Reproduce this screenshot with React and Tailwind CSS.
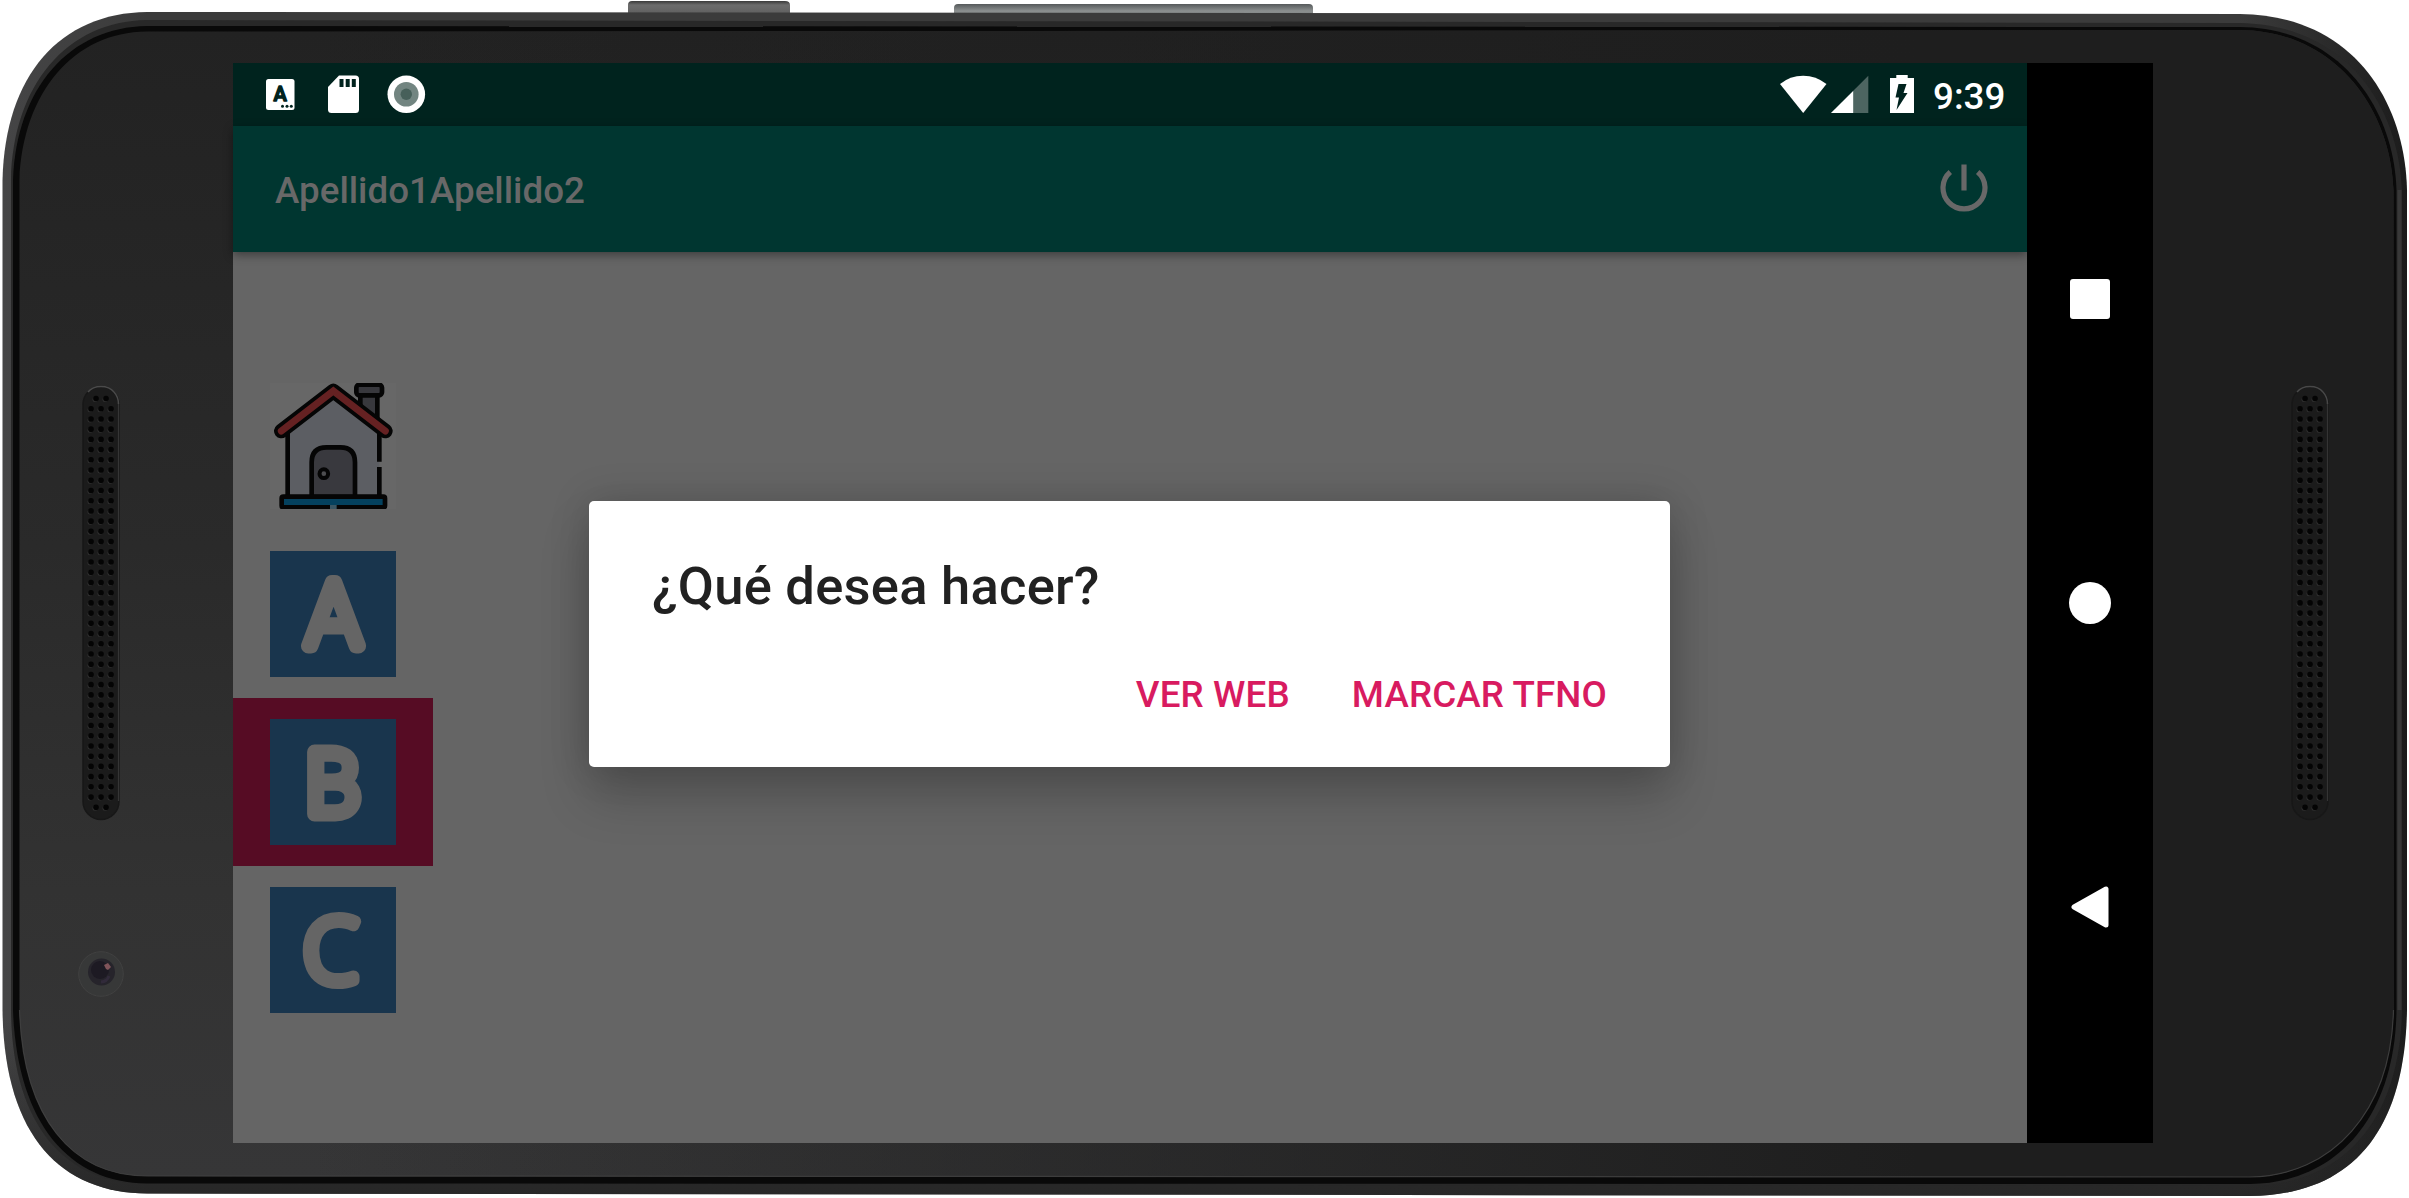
import React from "react";

const SPEAKER_ROWS = Array.from({ length: 41 }, (_, i) => i);

function DeviceBody() {
  return (
    <svg className="absolute inset-0" width="2409" height="1198" viewBox="0 0 2409 1198" aria-hidden="true">
      <defs>
        <linearGradient id="face" x1="0" y1="0" x2="0" y2="1">
          <stop offset="0" stopColor="#222222" />
          <stop offset="0.45" stopColor="#2a2a2a" />
          <stop offset="0.75" stopColor="#323232" />
          <stop offset="1" stopColor="#363637" />
        </linearGradient>
        <linearGradient id="faceRight" x1="0" y1="0" x2="1" y2="0">
          <stop offset="0" stopColor="#1e1e1e" stopOpacity="0" />
          <stop offset="0.12" stopColor="#1e1e1e" stopOpacity="0" />
          <stop offset="0.8" stopColor="#1e1e1e" stopOpacity="1" />
        </linearGradient>
        <linearGradient id="rim" x1="0" y1="0" x2="1" y2="0">
          <stop offset="0" stopColor="#454546" />
          <stop offset="0.06" stopColor="#3b3b3b" />
          <stop offset="0.93" stopColor="#3b3b3b" />
          <stop offset="1" stopColor="#1c1c1c" />
        </linearGradient>
        <linearGradient id="rimShade" x1="0" y1="0" x2="0" y2="1">
          <stop offset="0" stopColor="#222" stopOpacity="0" />
          <stop offset="0.85" stopColor="#222" stopOpacity="0" />
          <stop offset="1" stopColor="#222" stopOpacity="0.8" />
        </linearGradient>
        <linearGradient id="key" x1="0" y1="0" x2="0" y2="1">
          <stop offset="0" stopColor="#3a3a3a" />
          <stop offset="0.25" stopColor="#6c6c6c" />
          <stop offset="1" stopColor="#5c5c5c" />
        </linearGradient>
        <linearGradient id="keyLight" x1="0" y1="0" x2="0" y2="1">
          <stop offset="0" stopColor="#55595a" />
          <stop offset="0.5" stopColor="#8c9090" />
          <stop offset="1" stopColor="#777a7a" />
        </linearGradient>
      </defs>
      <path d="M628 16V5q0-4 4-4h153q5 0 5 4v12z" fill="url(#key)" />
      <path d="M954 16V8q0-4 4-4h351q4 0 4 4v10z" fill="url(#keyLight)" />
      <path
        d="M147 12L2240 14C2352 15 2405 100 2407 190V1010C2405 1134 2350 1195 2250 1196L147 1193.500C60 1193 4 1135 2.500 1010V180C5 75 60 13 147 12Z"
        fill="url(#rim)"
      />
      <path
        d="M147 12L2240 14C2352 15 2405 100 2407 190V1010C2405 1134 2350 1195 2250 1196L147 1193.500C60 1193 4 1135 2.500 1010V180C5 75 60 13 147 12Z"
        fill="url(#rimShade)"
      />
      <path
        d="M147 20L2240 23C2345 25 2399 105 2402 190V1010C2400 1122 2342 1185 2250 1186L147 1184C65 1184 12 1125 11 1010V180C13 85 67 21 147 20Z"
        fill="#282828"
      />
      <path
        d="M147 26L2240 27C2340 28 2394 108 2396.500 190V1010C2395 1118 2336 1183 2250 1184L147 1183.500C68 1183 17 1122 13 1010V180C16 88 70 27 147 26Z"
        fill="#090909"
      />
      <path
        d="M147 31.500L2240 30C2336 31 2391 110 2393.500 190V1010C2391 1112 2332 1176 2250 1177L147 1176C72 1176 23 1118 19.500 1010V180C23 92 74 32 147 31.500Z"
        fill="url(#face)"
      />
      <path
        d="M147 31.500L2240 30C2336 31 2391 110 2393.500 190V1010C2391 1112 2332 1176 2250 1177L147 1176C72 1176 23 1118 19.500 1010V180C23 92 74 32 147 31.500Z"
        fill="url(#faceRight)"
      />
      <path d="M2393.500 1010C2391 1112 2332 1176 2250 1177L147 1176C72 1176 23 1118 19.500 1010" fill="none" stroke="#454545" strokeOpacity="0.8" strokeWidth="1.200" />
      <path d="M2399.500 190V1010" stroke="#383838" strokeWidth="4" />
    </svg>
  );
}

function Speaker({ edge }) {
  return (
    <svg width="38" height="436" viewBox="0 0 38 436" aria-hidden="true">
      <rect x="1" y="1.500" width="36" height="433" rx="18" fill="#1b1b1b" stroke="#171717" strokeWidth="1.500" />
      <path d="M6 7C12 -0.500 26 -0.500 32 7Q36.500 12 36.500 19" fill="none" stroke={edge} strokeWidth="1.500" />
      <path d="M36.500 18V416" stroke={edge} strokeOpacity="0.600" strokeWidth="1.200" />
      {SPEAKER_ROWS.map((row) => {
        const columns = row === 0 || row === 40 ? [14, 24] : [9, 19, 29];
        return columns.map((x) => (
          <g key={`${row}-${x}`}>
            <circle cx={x - 1} cy={14.500 + row * 10.220} r="2.500" fill="#303030" />
            <circle cx={x} cy={13.500 + row * 10.220} r="2.800" fill="#040404" />
          </g>
        ));
      })}
    </svg>
  );
}

function Camera() {
  return (
    <svg width="46" height="46" viewBox="0 0 46 46" aria-hidden="true">
      <circle cx="23" cy="23" r="22.300" fill="#373838" stroke="#414141" />
      <circle cx="23.500" cy="21" r="13.500" fill="#26242b" />
      <circle cx="22" cy="19" r="9" fill="#1d1a23" />
      <path d="M26 14l4-2 3 4-3 3-2-1z" fill="#80545a" />
      <path d="M31 25a9 9 0 0 1-8 6" stroke="#312a3a" strokeWidth="3" fill="none" />
    </svg>
  );
}

function HouseTile() {
  return (
    <svg width="126" height="126" viewBox="0 0 378 378" aria-label="Inicio">
      <rect width="378" height="378" fill="#676767" />
      <g stroke="#050505" strokeWidth="14">
        <path d="M271 30H322V120L271 82Z" fill="#38383d" />
        <rect x="259" y="5" width="77" height="32" rx="9" fill="#38383d" />
        <path d="M53 140L190 30L328 140V342H53Z" fill="#5c5e63" stroke="none" />
        <path d="M53 140V342M328 140V236M328 252V342" fill="none" />
        <path d="M125 342V238Q125 193 170 193H211Q255 193 255 238V342Z" fill="#39393e" />
        <circle cx="161.500" cy="272" r="13" fill="#4d4d50" strokeWidth="12" />
        <rect x="35" y="341" width="310" height="32" rx="5" fill="#04415e" />
      </g>
      <rect x="180" y="366" width="20" height="12" fill="#3a5663" />
      <path d="M34 144L190 24L346 144" fill="none" stroke="#050505" strokeWidth="44" strokeLinecap="round" strokeLinejoin="round" />
      <path d="M34 144L190 24L346 144" fill="none" stroke="#652122" strokeWidth="21" strokeLinecap="round" />
    </svg>
  );
}

function LetterTile({ children }) {
  return (
    <svg
      className="bg-[#19354d] fill-[#656565] stroke-[#656565]"
      width="126"
      height="126"
      viewBox="0 0 126 126"
      textAnchor="middle"
      strokeLinejoin="round"
      strokeLinecap="round"
    >
      {children}
    </svg>
  );
}

function StatusBar() {
  return (
    <div className="flex h-[63px] shrink-0 items-center bg-[#00231e] text-white">
      <svg width="200" height="63" viewBox="0 0 200 63" aria-hidden="true">
        <rect x="33" y="16" width="28.500" height="31" rx="2.500" fill="#fff" />
        <text x="47.200" y="37.800" textAnchor="middle" fontSize="20" stroke="#00231e" strokeWidth="1.500" strokeLinejoin="round" className="fill-[#00231e] font-['Roboto',sans-serif] font-medium">
          A
        </text>
        <g fill="#00231e">
          <circle cx="49.500" cy="43.300" r="1.500" />
          <circle cx="54" cy="43.300" r="1.500" />
          <circle cx="58.300" cy="43.300" r="1.500" />
        </g>
        <path d="M106 12.500H122.500Q126 12.500 126 16V46.500Q126 50 122.500 50H98.500Q95 50 95 46.500V24Z" fill="#fff" />
        <path d="M106.500 16h4v8h-4zM112.700 16h4v8h-4zM118.800 16h4v8h-4z" fill="#00231e" />
        <circle cx="173.300" cy="31.300" r="18.800" fill="#fff" />
        <circle cx="173.300" cy="31.300" r="12.300" fill="#728581" />
        <circle cx="173.300" cy="31.300" r="5.700" fill="#47605a" />
      </svg>
      <div className="ml-auto flex items-center pr-[19px]">
        <svg width="153" height="63" viewBox="0 0 153 63" className="mr-px" aria-hidden="true">
          <path d="M0 21Q10 12.700 23.200 12.700Q36 12.700 46.500 21L23.200 50Z" fill="#fff" />
          <path d="M88.300 12.700V50H51Z" fill="#4d6561" />
          <path d="M73.200 28V50H51Z" fill="#fff" />
          <path d="M116.300 12h11.400v3h6.300v35H110V15h6.300z" fill="#fff" />
          <path d="M118.500 21h8l-3 9h4l-11 17 2.500-12.500h-3.500z" fill="#00231e" />
        </svg>
        <span className="-ml-px w-[75px] pt-[4px] text-[36.75px] leading-[59px] font-medium">9:39</span>
      </div>
    </div>
  );
}

function AppBar() {
  return (
    <header className="relative flex h-[126px] shrink-0 items-center bg-[#003630] pr-[39px] pl-[42px] text-[#686868] shadow-[0_3px_9px_rgba(0,0,0,0.4)]">
      <h1 className="pt-[3px] text-[36.75px] font-medium">Apellido1Apellido2</h1>
      <svg className="mb-[2px] ml-auto" width="48" height="48" viewBox="0 0 48 48" fill="none" stroke="#686868" strokeWidth="5.200" aria-label="Salir">
        <path d="M24 0.500V26.500" />
        <path d="M10.300 8A21 21 0 1 0 37.700 8" />
      </svg>
    </header>
  );
}

function Dialog() {
  return (
    <div className="absolute top-[438px] left-[356px] flex h-[266px] w-[1081px] flex-col rounded-[5px] bg-white px-[63px] shadow-[0_30px_50px_rgba(0,0,0,0.2),0_0_40px_rgba(0,0,0,0.16)]">
      <h2 className="mt-[54px] text-[52.5px] leading-[62px] font-medium tracking-[0.25px] text-[#212121]">¿Qué desea hacer?</h2>
      <div className="mt-[56px] flex justify-end gap-[62px] text-[36.75px] leading-[44px] font-medium tracking-[0.13px] text-[#d81b60]">
        <button>VER WEB</button>
        <button>MARCAR TFNO</button>
      </div>
    </div>
  );
}

export default function App() {
  return (
    <div className="relative flex h-[1198px] w-[2409px] overflow-hidden bg-white font-['Roboto',sans-serif]">
      <DeviceBody />
      <div className="relative flex w-[233px] shrink-0 flex-col pt-[385px] pl-[82px]">
        <Speaker edge="#4a4a4a" />
        <div className="mt-[130px] -ml-[4px]">
          <Camera />
        </div>
      </div>

      <div className="relative mt-[63px] flex h-[1080px] w-[1920px] shrink-0">
        <main className="flex w-[1794px] flex-col bg-[#656565]">
          <StatusBar />
          <AppBar />
          <nav className="flex flex-1 flex-col justify-center">
            <div className="flex h-[168px] w-[200px] items-center justify-center">
              <HouseTile />
            </div>
            <div className="flex h-[168px] w-[200px] items-center justify-center">
              <LetterTile>
                <text x="63.500" y="94.500" fontSize="89" strokeWidth="15" className="font-['Roboto',sans-serif] font-thin">A</text>
              </LetterTile>
            </div>
            <div className="flex h-[168px] w-[200px] items-center justify-center bg-[#560c24]">
              <LetterTile>
                <text x="62.500" y="94.500" fontSize="88" strokeWidth="15" className="font-['Roboto',sans-serif] font-thin">B</text>
              </LetterTile>
            </div>
            <div className="flex h-[168px] w-[200px] items-center justify-center">
              <LetterTile>
                <text x="60.500" y="94.500" fontSize="88" strokeWidth="12" className="font-['Open_Sans',sans-serif] font-light">C</text>
              </LetterTile>
            </div>
          </nav>
        </main>
        <aside className="flex w-[126px] flex-col justify-center bg-black">
          <div className="flex h-[304px] items-center justify-center">
            <div className="size-[40px] rounded-[3px] bg-white" />
          </div>
          <div className="flex h-[304px] items-center justify-center">
            <div className="size-[42px] rounded-full bg-white" />
          </div>
          <div className="flex h-[304px] items-center justify-center">
            <svg width="38" height="42" viewBox="0 0 38 42" aria-hidden="true">
              <path d="M3 21L35 3V39Z" fill="#fff" stroke="#fff" strokeWidth="5" strokeLinejoin="round" />
            </svg>
          </div>
        </aside>
        <Dialog />
      </div>

      <div className="relative flex flex-1 flex-col items-start pt-[385px] pl-[138px]">
        <Speaker edge="#484848" />
      </div>
    </div>
  );
}
